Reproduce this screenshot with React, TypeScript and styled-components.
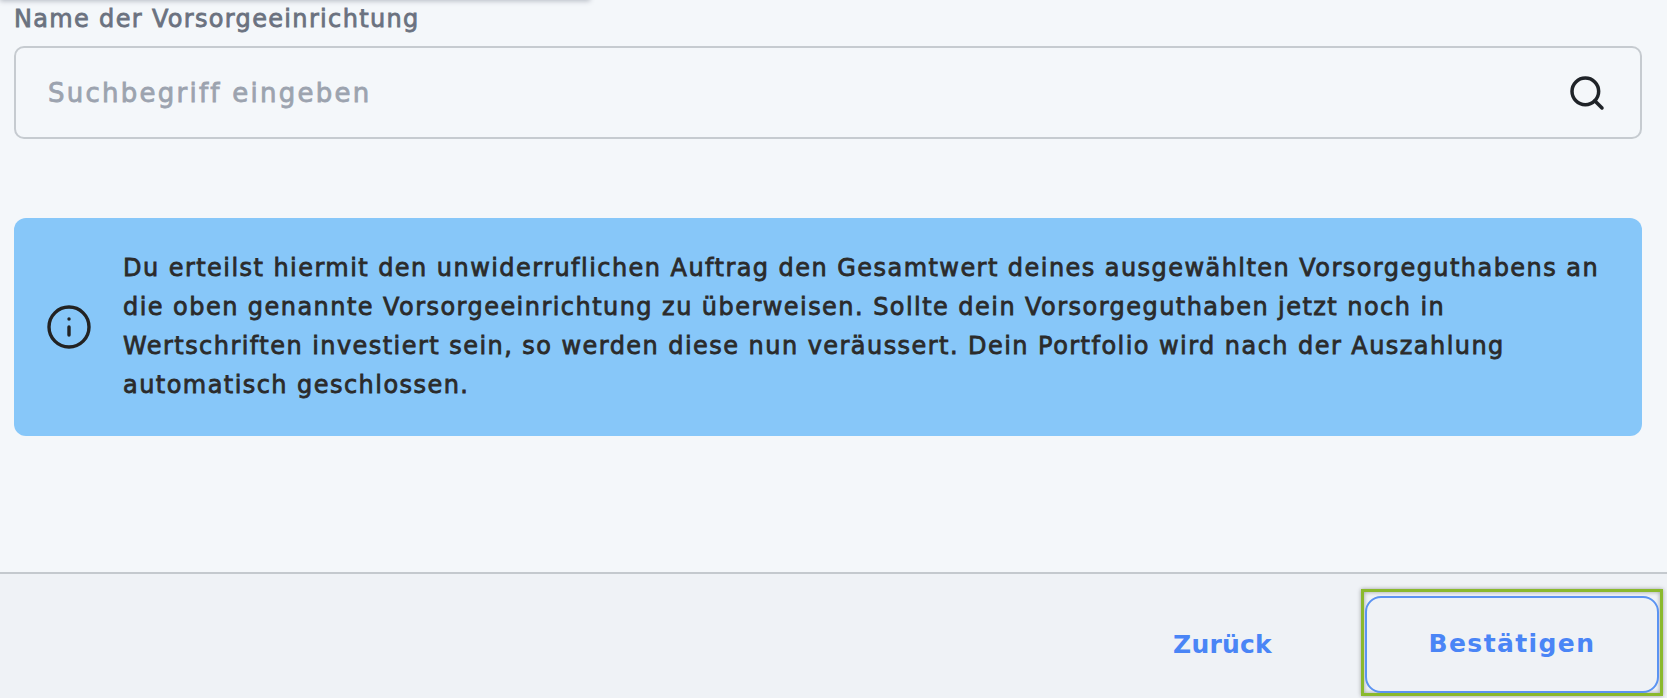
import React from 'react';
import styled, { createGlobalStyle } from 'styled-components';
import { Search, Info } from 'lucide-react';

const GlobalStyle = createGlobalStyle`
  html, body {
    margin: 0;
    padding: 0;
    height: 698px;
    overflow: hidden;
    background: #f4f7fa;
    font-family: 'DejaVu Sans', 'Liberation Sans', sans-serif;
  }
`;

const Page = styled.div`
  height: 698px;
  display: flex;
  flex-direction: column;
  position: relative;
`;

const MenuEdge = styled.div`
  position: absolute;
  top: -6px;
  left: 0;
  width: 590px;
  height: 6px;
  background: #fff;
  box-shadow: 0 1px 5px rgba(60, 70, 90, 0.35);
`;

const Content = styled.main`
  flex: 1;
  padding: 4px 25px 0 14px;
`;

const Label = styled.label`
  display: block;
  height: 42px;
  line-height: 30px;
  font-size: 24px;
  letter-spacing: 1.33px;
  -webkit-text-stroke: 0.8px #6b7280;
  color: #6b7280;
  white-space: nowrap;
`;

const SearchBox = styled.div`
  height: 93px;
  box-sizing: border-box;
  display: flex;
  align-items: center;
  justify-content: space-between;
  padding: 0 33px 0 32px;
  border: 2px solid #c6cbd0;
  border-radius: 10px;
`;

const Placeholder = styled.span`
  font-size: 26px;
  letter-spacing: 2.25px;
  -webkit-text-stroke: 0.8px #9ca3af;
  color: #9ca3af;
`;

const InfoBox = styled.section`
  margin-top: 79px;
  height: 218px;
  box-sizing: border-box;
  display: flex;
  align-items: center;
  gap: 30px;
  padding: 0 30px 0 31px;
  background: #87c7f9;
  border-radius: 12px;
  color: #2b2b2b;
`;

const InfoText = styled.p`
  margin: 0;
  font-size: 24px;
  line-height: 39px;
  letter-spacing: 1.45px;
  -webkit-text-stroke: 0.8px #2b2b2b;
`;

const Footer = styled.footer`
  height: 126px;
  box-sizing: border-box;
  border-top: 2px solid #c4c9ce;
  background: #eff2f6;
  display: flex;
  align-items: flex-start;
  justify-content: flex-end;
  padding: 15px 4px 0 0;
  gap: 89px;
`;

const BackButton = styled.button`
  border: 0;
  background: none;
  padding: 0;
  margin-top: 41px;
  font: 700 25px 'DejaVu Sans', 'Liberation Sans', sans-serif;
  letter-spacing: 0.25px;
  color: #4a85f6;
`;

const FocusRing = styled.div`
  padding: 4px 1px 0;
  border: 3px solid #8ab92d;
  box-shadow: 0 0 4px rgba(0, 0, 0, 0.35), inset 0 0 4px rgba(0, 0, 0, 0.35);
`;

const ConfirmButton = styled.button`
  display: block;
  width: 294px;
  height: 97px;
  box-sizing: border-box;
  padding: 0 0 2px;
  border: 2px solid #5b93f2;
  border-radius: 16px;
  background: #eff2f6;
  font: 700 25px 'DejaVu Sans', 'Liberation Sans', sans-serif;
  letter-spacing: 1.4px;
  color: #4a85f6;
`;

export default function App() {
  return (
    <Page>
      <GlobalStyle />
      <MenuEdge />
      <Content>
        <Label>Name der Vorsorgeeinrichtung</Label>
        <SearchBox>
          <Placeholder>Suchbegriff eingeben</Placeholder>
          <Search size={40} color="#1f2328" strokeWidth={2.1} />
        </SearchBox>
        <InfoBox>
          <Info size={48} color="#222" strokeWidth={1.7} style={{ flexShrink: 0 }} />
          <InfoText>
            Du erteilst hiermit den unwiderruflichen Auftrag den Gesamtwert deines ausgewählten Vorsorgeguthabens an
            die oben genannte Vorsorgeeinrichtung zu überweisen. Sollte dein Vorsorgeguthaben jetzt noch in
            Wertschriften investiert sein, so werden diese nun veräussert. Dein Portfolio wird nach der Auszahlung
            automatisch geschlossen.
          </InfoText>
        </InfoBox>
      </Content>
      <Footer>
        <BackButton>Zurück</BackButton>
        <FocusRing>
          <ConfirmButton>Bestätigen</ConfirmButton>
        </FocusRing>
      </Footer>
    </Page>
  );
}
